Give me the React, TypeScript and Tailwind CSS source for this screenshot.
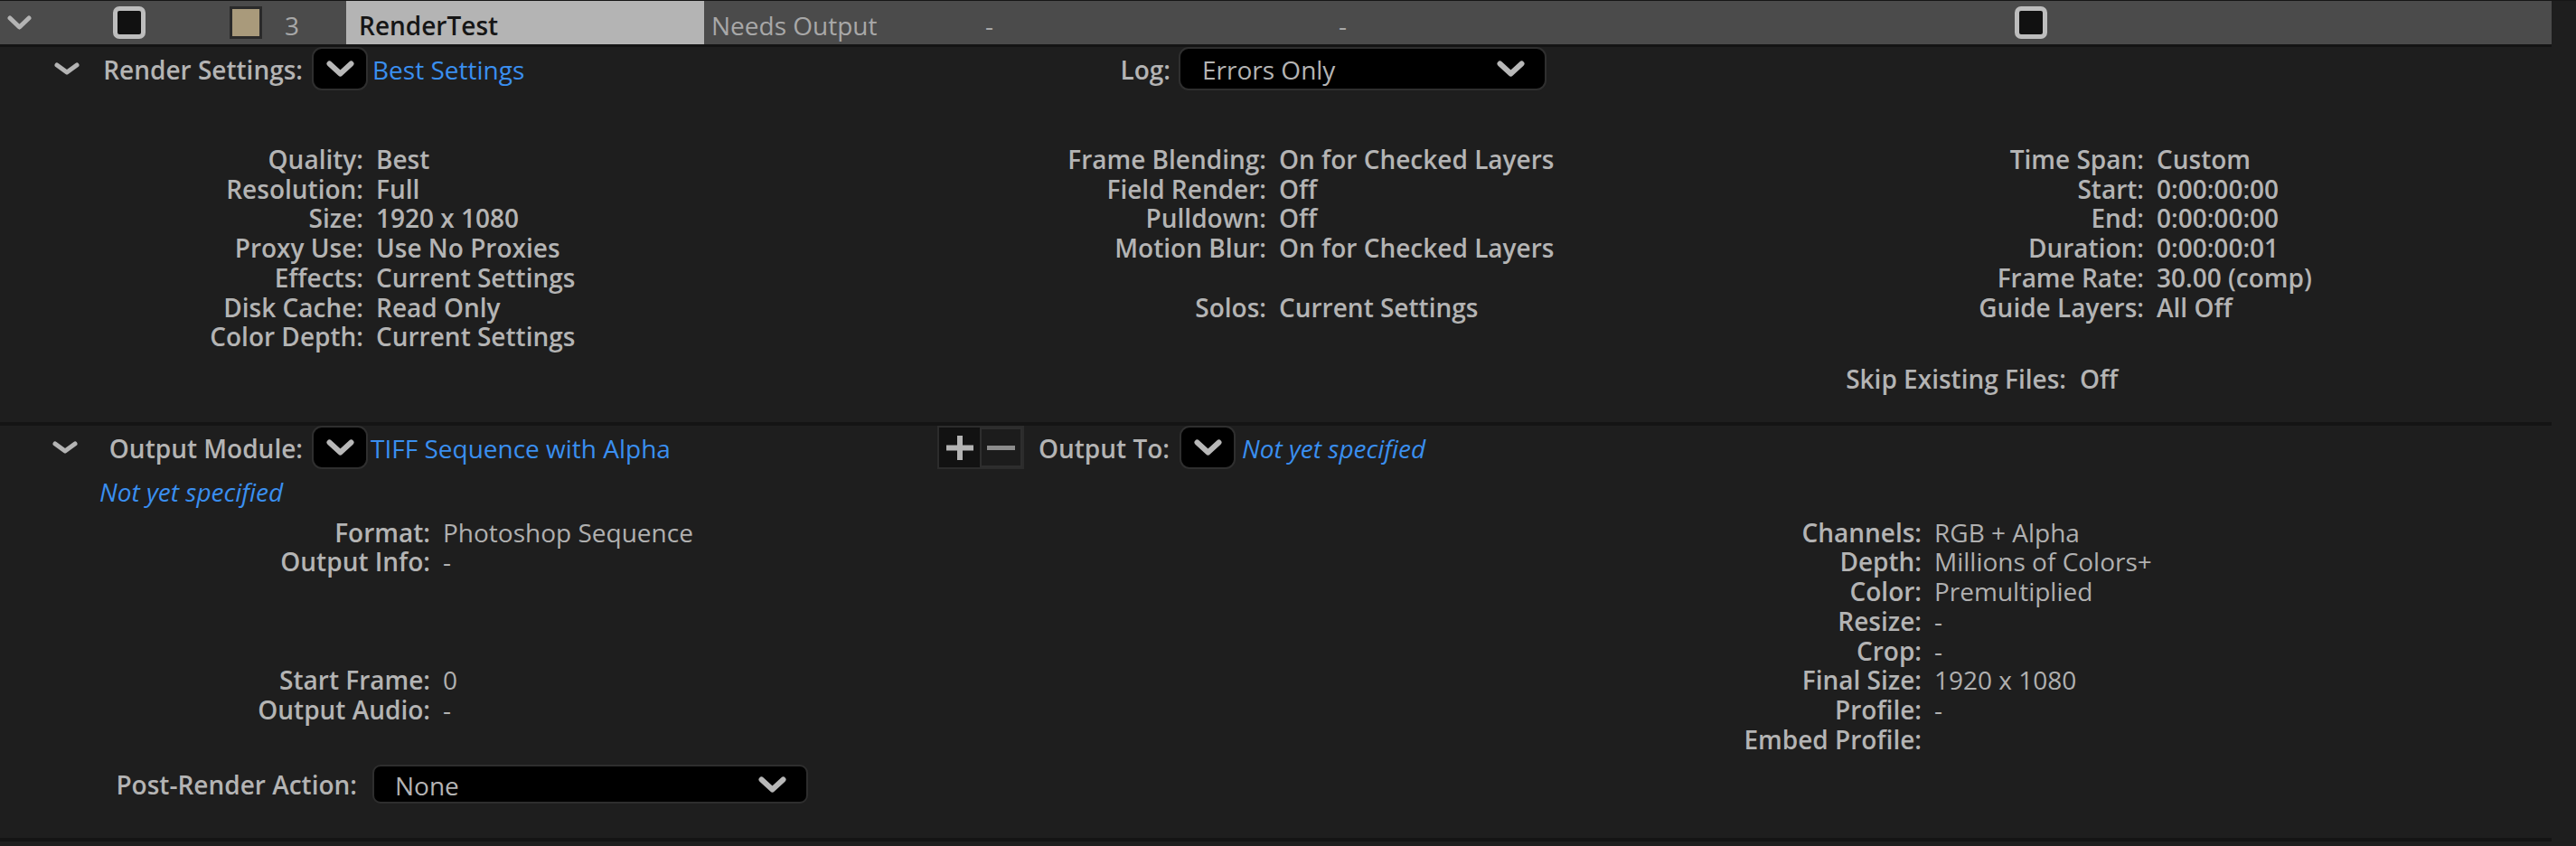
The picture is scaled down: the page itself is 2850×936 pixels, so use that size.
import React from "react";

const BLUE = "text-[#3a8ff0]";

function SecChevron() {
  return (
    <svg width="28" height="14" viewBox="0 0 28 14" className="block">
      <polyline points="3,3 14,11 25,3" fill="none" stroke="#b4b4b4" strokeWidth="5" strokeLinecap="round" strokeLinejoin="round" />
    </svg>
  );
}

function TopChevron() {
  return (
    <svg width="27" height="17" viewBox="0 0 27 17" className="block">
      <polyline points="3,3 13.5,13 24,3" fill="none" stroke="#b4b4b4" strokeWidth="5" strokeLinecap="round" strokeLinejoin="round" />
    </svg>
  );
}

function DDChevron() {
  return (
    <svg width="31" height="18" viewBox="0 0 31 18" className="block">
      <polyline points="3.5,3.5 15.5,14.5 27.5,3.5" fill="none" stroke="#b8b8b8" strokeWidth="6" strokeLinecap="round" strokeLinejoin="round" />
    </svg>
  );
}

function DropBtn({ className = "" }: { className?: string }) {
  return (
    <div className={`w-[62px] h-[48px] shrink-0 rounded-[11px] border-2 border-[#2f2f2f] bg-black flex items-center justify-center ${className}`}>
      <DDChevron />
    </div>
  );
}

function Checkbox() {
  return <div className="w-[36px] h-[36px] rounded-[7px] border-[5px] border-[#bdbdbd] bg-[#111111]" />;
}

function Row({ label, value, bold = true }: { label: string; value?: string; bold?: boolean }) {
  return (
    <>
      <div className="text-right font-semibold whitespace-nowrap">{label || "\u00a0"}</div>
      <div className={`whitespace-nowrap ${bold ? "font-semibold" : "font-normal text-[#b0b0b0]"}`}>{value || "\u00a0"}</div>
    </>
  );
}

function TopRow() {
  return (
    <div className="h-[51px] border-b-[3px] border-[#141414] bg-[#4b4b4b] flex items-stretch leading-[32.7px]">
      <div className="w-[125px] flex items-center pl-[8px]">
        <TopChevron />
      </div>
      <div className="w-[129px] flex items-center">
        <Checkbox />
      </div>
      <div className="w-[61px] flex items-center">
        <div className="w-[36px] h-[36px] border-[3px] border-[#2a2a2a] bg-[#a99a7b]" />
      </div>
      <div className="w-[68px] flex items-center pt-[7px] text-[#a8a8a8]">3</div>
      <div className="w-[396px] bg-[#b4b4b4] text-[#161616] font-semibold flex items-center pl-[14px] pt-[7px]">RenderTest</div>
      <div className="w-[311px] flex items-center pl-[8px] pt-[7px] text-[#a8a8a8]">Needs Output</div>
      <div className="w-[391px] flex items-center pt-[7px] text-[#a8a8a8]">-</div>
      <div className="w-[748px] flex items-center pt-[7px] text-[#a8a8a8]">-</div>
      <div className="flex items-center">
        <Checkbox />
      </div>
    </div>
  );
}

function RenderSection() {
  return (
    <div className="h-[415px] leading-[32.7px]">
      <div className="h-[48px] flex items-center">
        <div className="w-[1295px] flex items-center">
          <div className="w-[335px] flex items-center">
            <div className="ml-[60px]">
              <SecChevron />
            </div>
            <span className="ml-auto font-semibold pt-[3px]">Render Settings:</span>
          </div>
          <DropBtn className="ml-[10px]" />
          <span className={`ml-[5px] pt-[3px] ${BLUE}`}>Best Settings</span>
          <span className="ml-auto font-semibold pt-[3px]">Log:</span>
        </div>
        <div className="ml-[9px] w-[407px] h-[48px] rounded-[11px] border-2 border-[#2f2f2f] bg-black flex items-center pl-[24px] pr-[22px]">
          <span className="pt-[3px]">Errors Only</span>
          <span className="ml-auto">
            <DDChevron />
          </span>
        </div>
      </div>

      <div className="mt-[60px] flex">
        <div className="w-[1000px] grid grid-cols-[402px_1fr] gap-x-[14px] content-start">
          <Row label="Quality:" value="Best" />
          <Row label="Resolution:" value="Full" />
          <Row label="Size:" value="1920 x 1080" />
          <Row label="Proxy Use:" value="Use No Proxies" />
          <Row label="Effects:" value="Current Settings" />
          <Row label="Disk Cache:" value="Read Only" />
          <Row label="Color Depth:" value="Current Settings" />
        </div>
        <div className="w-[1000px] grid grid-cols-[401px_1fr] gap-x-[14px] content-start">
          <Row label="Frame Blending:" value="On for Checked Layers" />
          <Row label="Field Render:" value="Off" />
          <Row label="Pulldown:" value="Off" />
          <Row label="Motion Blur:" value="On for Checked Layers" />
          <Row label="" value="" />
          <Row label="Solos:" value="Current Settings" />
        </div>
        <div className="flex-1 flex flex-col">
          <div className="grid grid-cols-[372px_1fr] gap-x-[14px] content-start">
            <Row label="Time Span:" value="Custom" />
            <Row label="Start:" value="0:00:00:00" />
            <Row label="End:" value="0:00:00:00" />
            <Row label="Duration:" value="0:00:00:01" />
            <Row label="Frame Rate:" value="30.00 (comp)" />
            <Row label="Guide Layers:" value="All Off" />
          </div>
          <div className="mt-[47px] flex font-semibold">
            <span className="w-[286px] text-right whitespace-nowrap">Skip Existing Files:</span>
            <span className="ml-[15px]">Off</span>
          </div>
        </div>
      </div>
    </div>
  );
}

function PlusMinus() {
  return (
    <div className="w-[96px] h-[48px] flex border-2 border-[#2c2c2c] bg-[#1a1a1a]">
      <div className="w-[45px] h-full bg-[#121212] flex items-center justify-center">
        <svg width="30" height="27" viewBox="0 0 30 27" className="block">
          <rect x="12" y="0" width="6" height="27" fill="#b4b4b4" />
          <rect x="0" y="10.5" width="30" height="6" fill="#b4b4b4" />
        </svg>
      </div>
      <div className="flex-1 h-full border-2 border-[#2e2e2e] bg-[#1c1c1c] flex items-center justify-center">
        <svg width="31" height="5" viewBox="0 0 31 5" className="block">
          <rect x="0" y="0" width="31" height="5" fill="#8c8c8c" />
        </svg>
      </div>
    </div>
  );
}

function OutputSection() {
  return (
    <div className="h-[456px] leading-[32.7px]">
      <div className="h-[48px] flex items-center">
        <div className="w-[1037px] flex items-center">
          <div className="w-[335px] flex items-center">
            <div className="ml-[58px]">
              <SecChevron />
            </div>
            <span className="ml-auto font-semibold pt-[3px]">Output Module:</span>
          </div>
          <DropBtn className="ml-[10px]" />
          <span className={`ml-[3px] pt-[3px] whitespace-nowrap ${BLUE}`}>TIFF Sequence with Alpha</span>
        </div>
        <PlusMinus />
        <span className="w-[161px] text-right font-semibold pt-[3px] whitespace-nowrap">Output To:</span>
        <DropBtn className="ml-[11px]" />
        <span className={`ml-[7px] italic pt-[3px] ${BLUE}`}>Not yet specified</span>
      </div>

      <div className={`mt-[9px] pl-[110px] italic ${BLUE}`}>Not yet specified</div>

      <div className="mt-[12px] flex">
        <div className="w-[1650px] grid grid-cols-[476px_1fr] gap-x-[14px] content-start">
          <Row label="Format:" value="Photoshop Sequence" bold={false} />
          <Row label="Output Info:" value="-" bold={false} />
          <Row label="" value="" />
          <Row label="" value="" />
          <Row label="" value="" />
          <Row label="Start Frame:" value="0" bold={false} />
          <Row label="Output Audio:" value="-" bold={false} />
        </div>
        <div className="flex-1 grid grid-cols-[476px_1fr] gap-x-[14px] content-start">
          <Row label="Channels:" value="RGB + Alpha" bold={false} />
          <Row label="Depth:" value="Millions of Colors+" bold={false} />
          <Row label="Color:" value="Premultiplied" bold={false} />
          <Row label="Resize:" value="-" bold={false} />
          <Row label="Crop:" value="-" bold={false} />
          <Row label="Final Size:" value="1920 x 1080" bold={false} />
          <Row label="Profile:" value="-" bold={false} />
          <Row label="Embed Profile:" value="" bold={false} />
        </div>
      </div>

      <div className="mt-[12px] h-[43px] flex items-center">
        <span className="w-[395px] text-right font-semibold whitespace-nowrap pt-[2px]">Post-Render Action:</span>
        <div className="ml-[17px] w-[482px] h-[43px] rounded-[9px] border-2 border-[#2e2e2e] bg-black flex items-center pl-[23px] pr-[22px]">
          <span className="pt-[3px]">None</span>
          <span className="ml-auto">
            <DDChevron />
          </span>
        </div>
      </div>
    </div>
  );
}

export default function App() {
  return (
    <div className="w-[2850px] h-[936px] overflow-hidden bg-[#1e1e1e] border-t border-[#161616] font-['Open_Sans',sans-serif] text-[28px] text-[#b4b4b4]">
      <div className="w-[2823px]">
        <TopRow />
        <RenderSection />
        <div className="h-[4px] bg-[#141414]" />
        <OutputSection />
        <div className="h-[4px] bg-[#141414]" />
      </div>
    </div>
  );
}
